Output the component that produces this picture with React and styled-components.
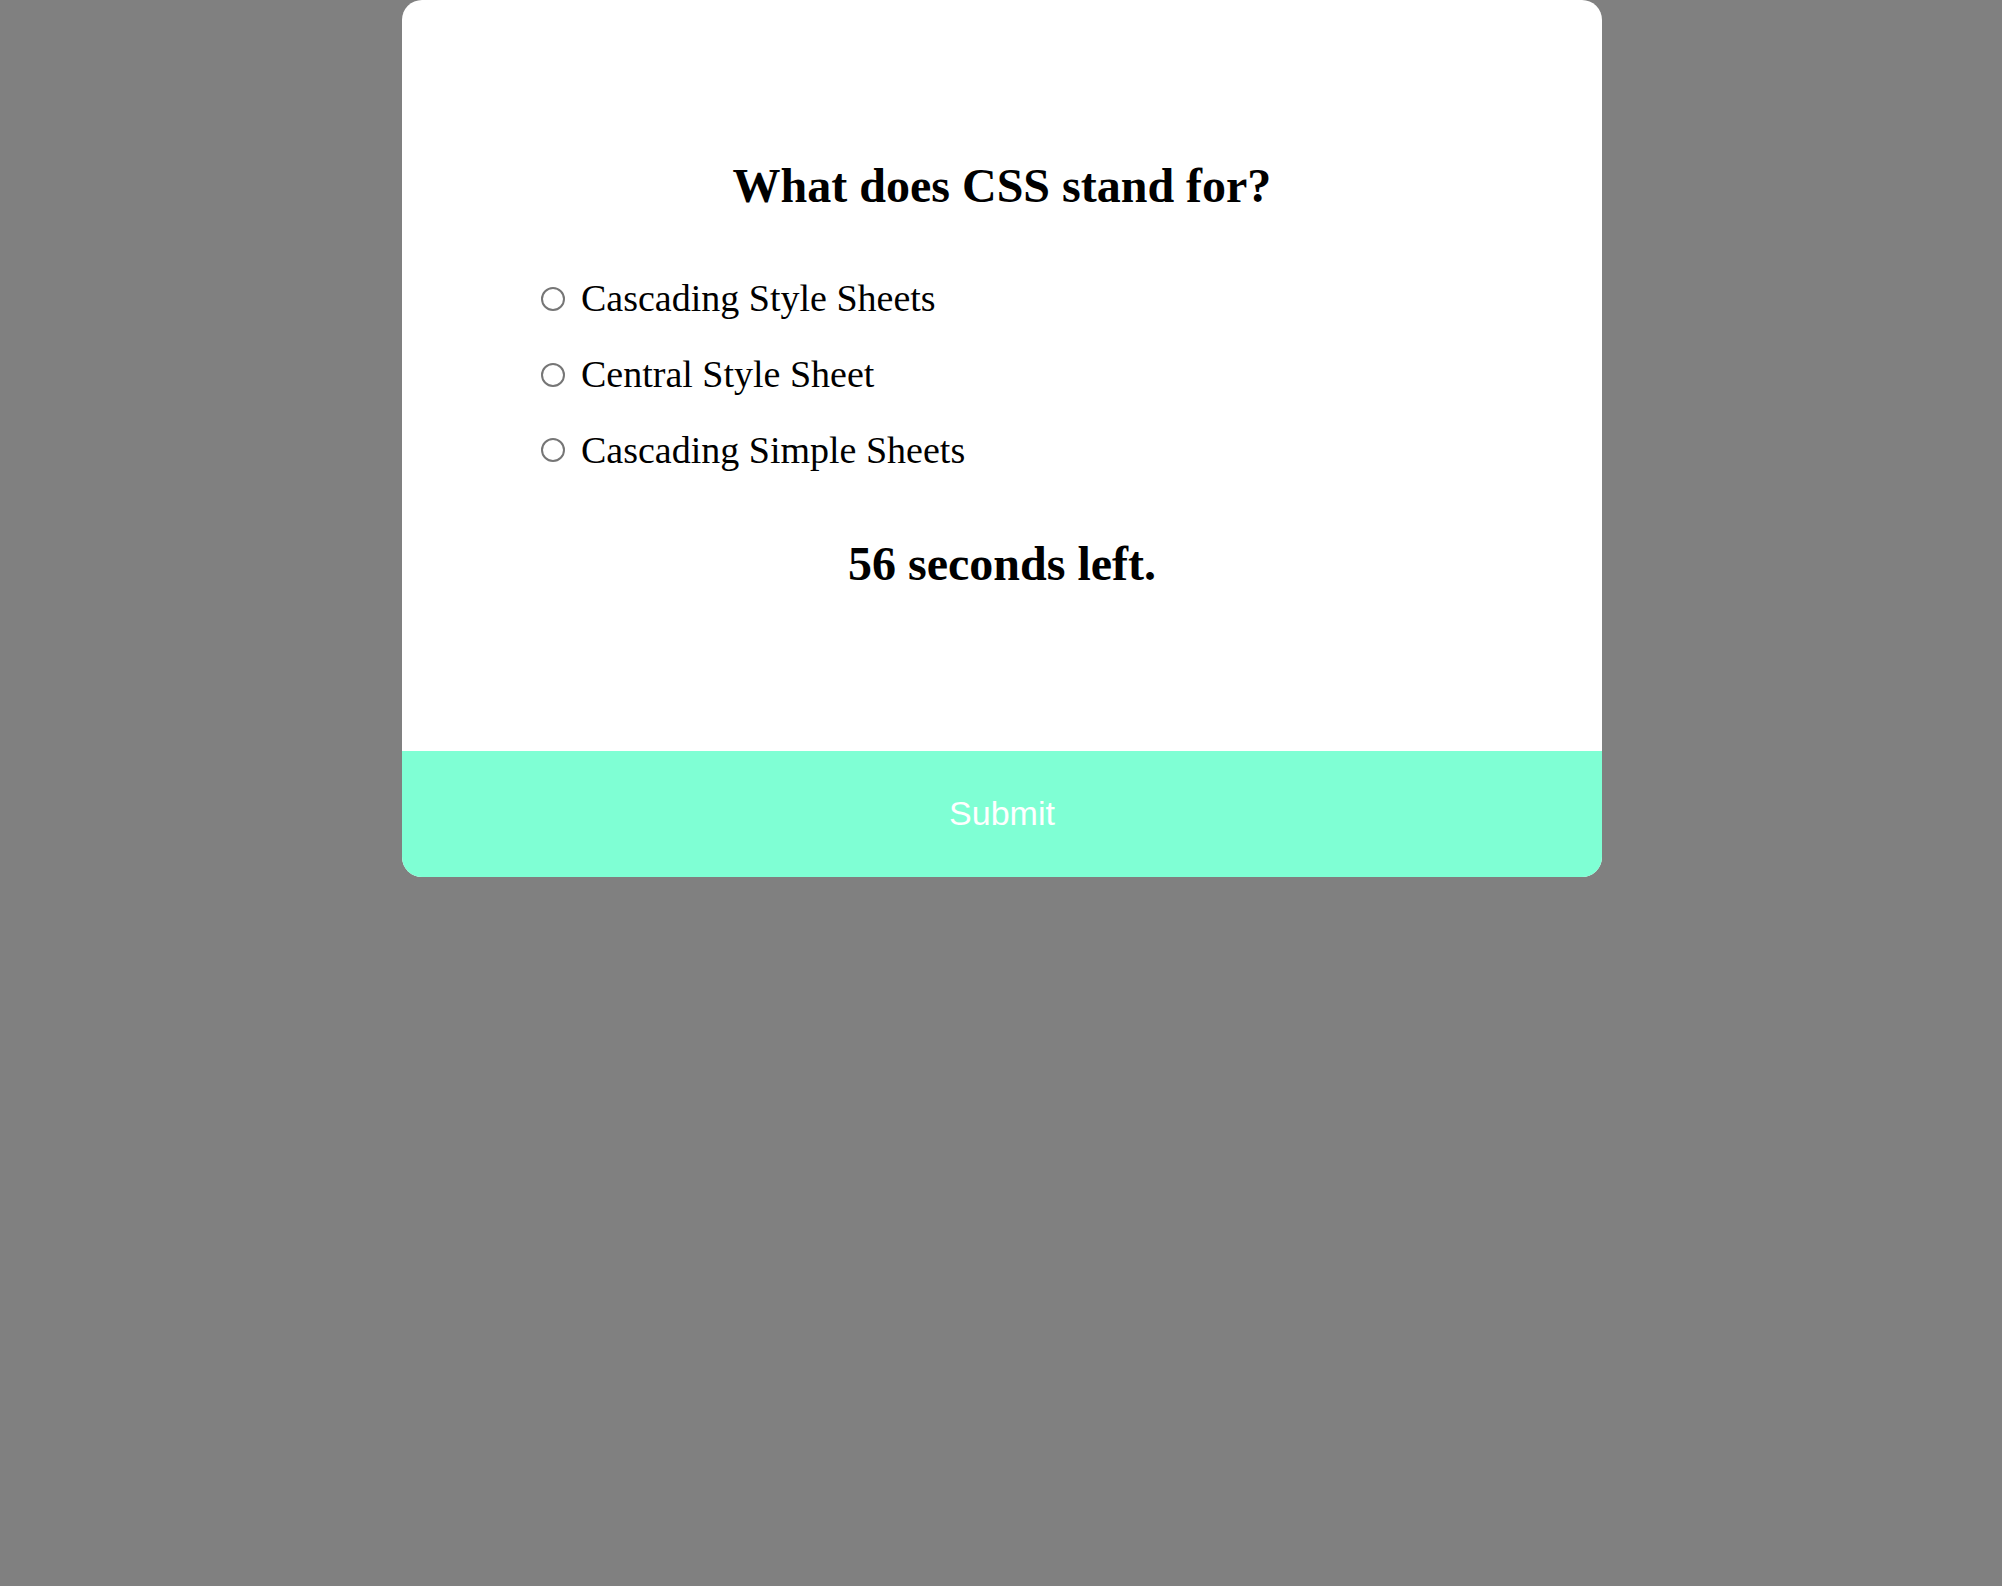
import { useState } from 'react';
import styled, { createGlobalStyle } from 'styled-components';

const GlobalStyle = createGlobalStyle`
	html, body {
		margin: 0;
		padding: 0;
		background: #808080;
	}
	body {
		font-family: 'Liberation Serif', 'Times New Roman', serif;
		color: #000;
	}
`;

const options = [
	'Cascading Style Sheets',
	'Central Style Sheet',
	'Cascading Simple Sheets'
];

const App = () => {
	const [answer, setAnswer] = useState('');

	return (
		<>
			<GlobalStyle />
			<Page>
				<Card>
					<Body>
						<Question>What does CSS stand for?</Question>
						<OptionList>
							{options.map((option) => (
								<Option key={option}>
									<Radio
										type='radio'
										name='answer'
										value={option}
										checked={answer === option}
										onChange={() => setAnswer(option)}
									/>
									{option}
								</Option>
							))}
						</OptionList>
						<Timer>56 seconds left.</Timer>
					</Body>
					<SubmitButton type='button'>Submit</SubmitButton>
				</Card>
			</Page>
		</>
	);
};

export default App;

const Page = styled.div`
	min-height: 100vh;
	display: flex;
	justify-content: center;
	align-items: flex-start;
	padding-left: 2px;
	box-sizing: border-box;
`;

const Card = styled.div`
	width: 1200px;
	background: #fff;
	border-radius: 20px;
	overflow: hidden;
	display: flex;
	flex-direction: column;
`;

const Body = styled.div`
	display: flex;
	flex-direction: column;
	padding: 158px 0 160px;
`;

const Question = styled.h1`
	margin: 0;
	font-size: 48px;
	font-weight: bold;
	line-height: 1.15;
	text-align: center;
`;

const OptionList = styled.div`
	display: flex;
	flex-direction: column;
	gap: 32px;
	margin-top: 64px;
	padding-left: 139px;
`;

const Option = styled.label`
	display: flex;
	align-items: center;
	gap: 16px;
	font-size: 38px;
	line-height: 1.15;
	cursor: pointer;
`;

const Radio = styled.input`
	appearance: none;
	box-sizing: border-box;
	width: 24px;
	height: 24px;
	margin: 0;
	border: 2px solid #767676;
	border-radius: 50%;
	background: #fff;
	cursor: pointer;

	&:checked {
		border-color: #0075ff;
		box-shadow: inset 0 0 0 4px #fff;
		background: #0075ff;
	}
`;

const Timer = styled.h2`
	margin: 64px 0 0;
	font-size: 48px;
	font-weight: bold;
	line-height: 1.15;
	text-align: center;
`;

const SubmitButton = styled.button`
	height: 126px;
	border: none;
	background: #7fffd4;
	color: #fff;
	font-family: 'Liberation Sans', Arial, sans-serif;
	font-size: 34px;
	padding: 0 0 2px;
	cursor: pointer;
`;
